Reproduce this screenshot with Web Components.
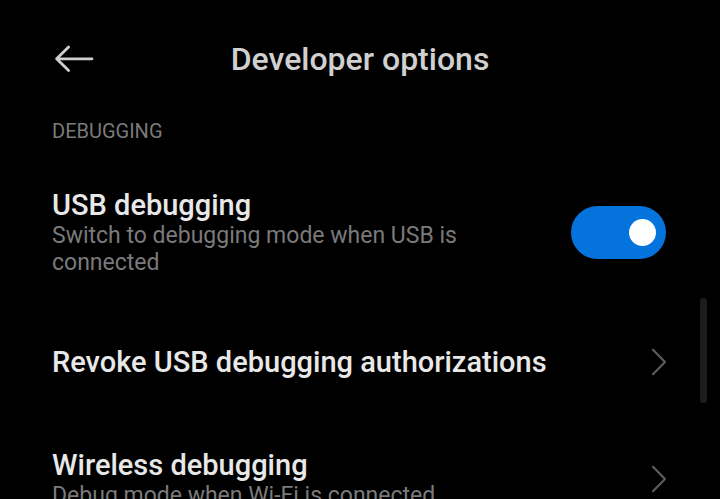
<!DOCTYPE html>
<html lang="en">
<head>
<meta charset="utf-8">
<title>Developer options</title>
<style>
html, body { margin: 0; height: 100%; background: #000; }
body { font-family: Roboto, "Noto Sans", sans-serif; overflow: hidden; }
</style>
</head>
<body>
<settings-page>
  <settings-header slot="header">Developer options</settings-header>
  <settings-section>
    <span slot="title">Debugging</span>
    <toggle-row checked><span slot="label">USB debugging</span><span slot="note">Switch to debugging mode when USB is connected</span></toggle-row>
    <link-row>Revoke USB debugging authorizations</link-row>
    <link-row>Wireless debugging<span slot="note">Debug mode when Wi-Fi is connected</span></link-row>
  </settings-section>
</settings-page>
<script>
const define = (name, html, setup) => customElements.define(name, class extends HTMLElement {
  constructor() {
    super();
    this.attachShadow({ mode: "open" }).innerHTML = html;
  }
  connectedCallback() { if (setup) setup(this); }
});

const rowText = `
.label { display: block; font-size: 29px; line-height: 34px; font-weight: 500; }
.note { display: block; font-size: 23px; line-height: 27px; color: #7a7a7a; }`;

define("settings-page", `
<style>
:host { display: block; position: relative; box-sizing: border-box; height: 100vh; padding: 0 52px; overflow: hidden; background: #000; color: #e8e8e8; }
.thumb { position: absolute; right: 13px; top: 298px; width: 7px; height: 105px; border-radius: 3px; background: #1c1c1c; }
</style>
<slot name="header"></slot>
<main><slot></slot></main>
<div class="thumb" aria-hidden="true"></div>`);

define("settings-header", `
<style>
:host { display: block; }
header { display: grid; grid-template-columns: 44px 1fr 44px; align-items: center; height: 118px; }
button { all: unset; display: block; height: 32px; cursor: pointer; }
svg { display: block; }
h1 { margin: 0; text-align: center; font-size: 32px; line-height: 40px; font-weight: 500; color: #d0d0d0; }
</style>
<header>
  <button aria-label="Back"><svg width="44" height="32" viewBox="0 0 44 32" fill="none" stroke="#cfcfcf" stroke-width="2.8" stroke-linecap="round" stroke-linejoin="round"><path d="M40 15.8H4.6M16.6 4L4.6 15.8L16.6 27.6"/></svg></button>
  <h1><slot></slot></h1>
</header>`);

define("settings-section", `
<style>
:host { display: block; }
h2 { margin: 0; font-size: 20px; line-height: 26px; font-weight: 400; text-transform: uppercase; color: #7a7a7a; }
.rows { display: flex; flex-direction: column; padding-top: 44px; }
</style>
<section><h2><slot name="title"></slot></h2><div class="rows"><slot></slot></div></section>`);

define("toggle-row", `
<style>
:host { display: block; padding-bottom: 66px; }
label { display: flex; align-items: center; justify-content: space-between; gap: 48px; }
.text { flex: 1; max-width: 432px; }
${rowText}
input { appearance: none; box-sizing: border-box; flex: none; margin: 0 2px 0 0; width: 95px; height: 53px; border-radius: 27px; padding: 0 10px; background: #333; display: flex; align-items: center; }
input::before { content: ""; width: 27px; height: 27px; border-radius: 50%; background: #fff; }
input:checked { background: #0474dc; justify-content: flex-end; }
</style>
<label><span class="text"><span class="label"><slot name="label"></slot></span><span class="note"><slot name="note"></slot></span></span><input type="checkbox" role="switch"></label>`,
el => { el.shadowRoot.querySelector("input").checked = el.hasAttribute("checked"); });

define("link-row", `
<style>
:host { display: block; padding-bottom: 66px; }
a { display: flex; align-items: center; justify-content: space-between; min-height: 40px; color: inherit; text-decoration: none; }
${rowText}
svg { flex: none; display: block; }
</style>
<a href="#"><span><span class="label"><slot></slot></span><span class="note"><slot name="note"></slot></span></span>
<svg width="18" height="30" viewBox="0 0 18 30" fill="none" stroke="#5c5c5c" stroke-width="2.2" stroke-linecap="round" stroke-linejoin="round" aria-hidden="true"><path d="M3 2.8L15 15L3 27.2"/></svg></a>`);
</script>
</body>
</html>
